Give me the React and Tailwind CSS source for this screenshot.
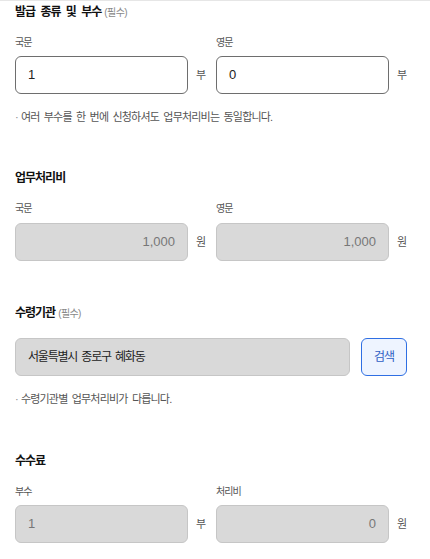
export default function App() {
  const font = { fontFamily: '"Liberation Sans", "Noto Sans CJK KR", sans-serif' };
  const Title = ({ children, req, className = "" }) => (
    <div className={"h-5 leading-5 text-[12px] font-bold tracking-[-1px] [word-spacing:3px] text-[#111] " + className}>
      {children}
      {req && <span className="ml-[3px] text-[10px] font-normal tracking-[-0.6px] text-[#888]">(필수)</span>}
    </div>
  );
  const Label = ({ children, className = "" }) => (
    <div className={"h-[14px] leading-[14px] text-[10px] tracking-[-1px] text-[#555] " + className}>{children}</div>
  );
  const Field = ({ value, unit, disabled, right }) => (
    <div className="flex w-[201px] items-center">
      <div
        className={
          "flex h-[38px] w-[173px] items-center rounded-[6px] border px-3 text-[13px] " +
          (right ? "justify-end " : "justify-start ") +
          (disabled ? "border-[#c6c6c6] bg-[#d9d9d9] text-[#777]" : "border-[#6e6e6e] bg-white text-[#222]")
        }
      >
        {value}
      </div>
      <span className="ml-2 text-[11px] text-[#555]">{unit}</span>
    </div>
  );
  const Note = ({ children, className = "" }) => (
    <div className={"h-4 leading-4 text-[11px] tracking-[-0.8px] [word-spacing:2px] text-[#555] " + className}>
      <span className="mr-[3px] text-[#888]">·</span>
      {children}
    </div>
  );
  return (
    <div style={font} className="h-[559px] w-[430px] overflow-hidden border-t border-[#e6e6e6] bg-white pl-[15px]">
      <Title req className="mt-[1px]">발급 종류 및 부수</Title>
      <div className="mt-[14px] flex">
        <Label className="w-[201px]">국문</Label>
        <Label>영문</Label>
      </div>
      <div className="mt-[6px] flex">
        <Field value="1" unit="부" />
        <Field value="0" unit="부" />
      </div>
      <Note className="mt-[15px]">여러 부수를 한 번에 신청하셔도 업무처리비는 동일합니다.</Note>

      <Title className="mt-[43px]">업무처리비</Title>
      <div className="mt-[14px] flex">
        <Label className="w-[201px]">국문</Label>
        <Label>영문</Label>
      </div>
      <div className="mt-[7px] flex">
        <Field value="1,000" unit="원" disabled right />
        <Field value="1,000" unit="원" disabled right />
      </div>

      <Title req className="mt-[42px]">수령기관</Title>
      <div className="mt-[15px] flex items-center">
        <div className="flex h-[38px] w-[335px] items-center rounded-[6px] border border-[#c6c6c6] bg-[#d9d9d9] px-3 text-[12px] tracking-[-1.2px] [word-spacing:2px] text-[#222]">
          서울특별시 종로구 혜화동
        </div>
        <button className="ml-[11px] flex h-[38px] w-[46px] items-center justify-center rounded-[6px] border border-[#2f6fe3] bg-[#eef4ff] text-[12px] tracking-[-1px] text-[#2f5fc4]">
          검색
        </button>
      </div>
      <Note className="mt-[15px]">수령기관별 업무처리비가 다릅니다.</Note>

      <Title className="mt-[44px]">수수료</Title>
      <div className="mt-[14px] flex">
        <Label className="w-[201px]">부수</Label>
        <Label>처리비</Label>
      </div>
      <div className="mt-[6px] flex">
        <Field value="1" unit="부" disabled />
        <Field value="0" unit="원" disabled right />
      </div>
    </div>
  );
}
